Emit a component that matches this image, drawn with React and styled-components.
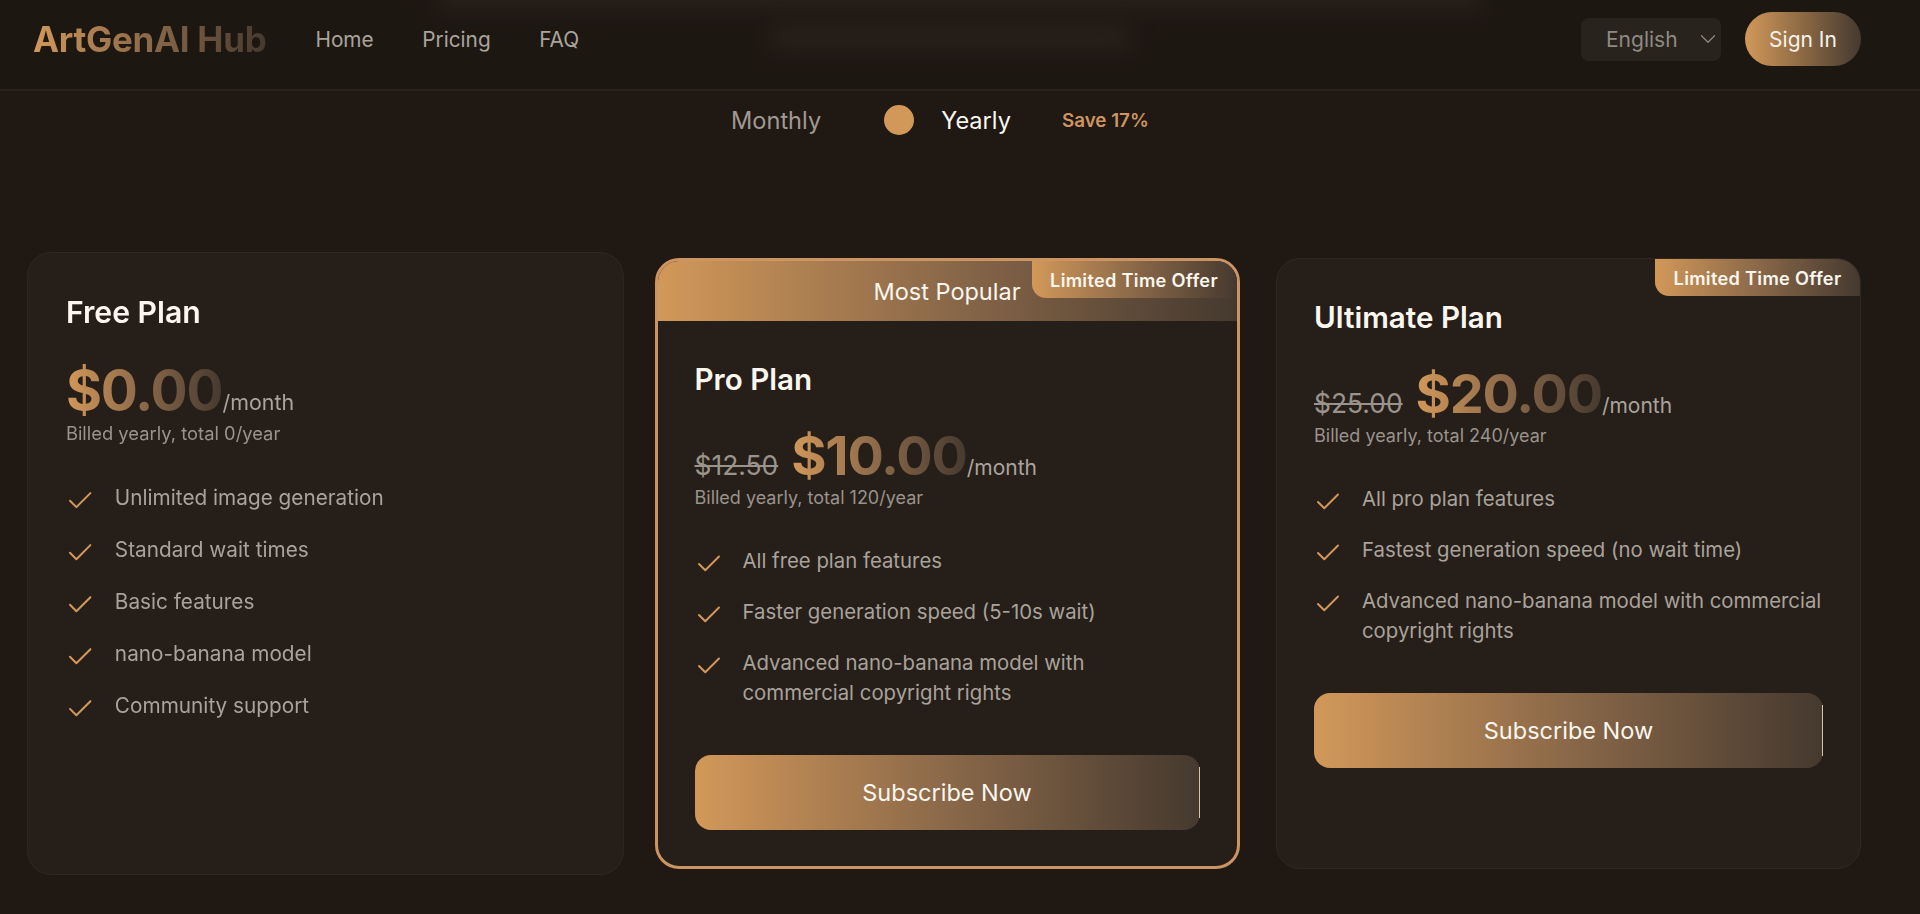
import { Check, ChevronDown } from "lucide-react";
import styled, { createGlobalStyle } from "styled-components";

const GlobalStyle = createGlobalStyle`
  html, body {
    margin: 0;
    height: 914px;
    overflow: hidden;
    background: #1f1813;
    font-family: "Inter", "Liberation Sans", sans-serif;
  }
  * { box-sizing: border-box; }
`;

const goldFade = "linear-gradient(90deg, #d29859 0%, #8a6849 50%, #45392f 100%)";

const Page = styled.div`
  width: 1920px;
  height: 914px;
  overflow: hidden;
`;

const Header = styled.header`
  position: relative;
  height: 91px;
  padding: 12px 59px 0 33px;
  display: flex;
  justify-content: space-between;
  background: #1d1712;
  border-bottom: 2px solid #2a231d;
  overflow: hidden;
`;
const BlurLine = styled.div`
  position: absolute;
  left: ${(p) => p.$left}px;
  top: ${(p) => p.$top}px;
  width: ${(p) => p.$width}px;
  height: ${(p) => p.$height}px;
  background: #3a3027;
  filter: blur(12px);
  opacity: 0.55;
`;
const HeaderLeft = styled.div`
  display: flex;
  align-items: center;
  height: 54px;
  position: relative;
`;
const Logo = styled.div`
  font-size: 35px;
  font-weight: 700;
  letter-spacing: -0.3px;
  background: ${goldFade};
  -webkit-background-clip: text;
  background-clip: text;
  color: transparent;
  margin-right: 49px;
`;
const Nav = styled.nav`
  display: flex;
  gap: 48.5px;
`;
const NavLink = styled.a`
  font-size: 20.8px;
  color: #aaa49c;
`;
const HeaderRight = styled.div`
  display: flex;
  align-items: center;
  gap: 24px;
  height: 54px;
  position: relative;
`;
const LangSelect = styled.div`
  width: 140px;
  height: 43px;
  padding: 0 0 0 25px;
  display: flex;
  align-items: center;
  justify-content: space-between;
  background: #29231e;
  border-radius: 8px;
  font-size: 21px;
  color: #8f8a82;
`;
const SignIn = styled.button`
  width: 116px;
  height: 54px;
  border: none;
  border-radius: 27px;
  background: linear-gradient(90deg, #d29859 0%, #45392f 100%);
  color: #f7f2ea;
  font: 400 21px "Inter", sans-serif;
`;

const ToggleRow = styled.div`
  height: 56px;
  padding: 2px 0 0 731px;
  display: flex;
  align-items: center;
  font-size: 23.6px;
`;
const ToggleLabel = styled.span`
  color: ${(p) => (p.$active ? "#fbf6ee" : "#a09a92")};
`;
const Track = styled.div`
  width: 62px;
  margin: 0 27px 0 31px;
  display: flex;
  justify-content: flex-end;
`;
const Thumb = styled.div`
  width: 30px;
  height: 30px;
  border-radius: 50%;
  background: #d29859;
`;
const Save = styled.span`
  margin-left: 51px;
  font-size: 18.8px;
  font-weight: 600;
  color: #cf9560;
`;

const Plans = styled.main`
  margin-top: 111px;
  padding-left: 33px;
  display: grid;
  grid-template-columns: repeat(3, 585px);
  column-gap: 36.5px;
  height: 611px;
`;
const Card = styled.section`
  position: relative;
  display: flex;
  flex-direction: column;
  background: #261e19;
  border: ${(p) => (p.$featured ? "3px solid #cc9462" : "1px solid #30281f")};
  border-radius: 24px;
  overflow: hidden;
  transform: ${(p) => (p.$hovered ? "scale(1.02)" : "none")};
`;
const PopularBanner = styled.div`
  flex: none;
  height: 60px;
  display: flex;
  align-items: center;
  justify-content: center;
  background: ${goldFade};
  color: #fbf6ee;
  font-size: 23.5px;
`;
const OfferBadge = styled.div`
  position: absolute;
  top: 0;
  right: 0;
  width: 205px;
  height: 37px;
  display: flex;
  align-items: center;
  justify-content: center;
  background: ${goldFade};
  border-bottom-left-radius: 14px;
  color: #fbf6ee;
  font-size: 18.2px;
  font-weight: 600;
  letter-spacing: 0.3px;
`;
const CardBody = styled.div`
  flex: 1;
  padding: 36px 37px 30px;
  display: flex;
  flex-direction: column;
`;
const PlanName = styled.h2`
  margin: 0;
  font-size: 29.6px;
  line-height: 44px;
  font-weight: 600;
  color: #fbf6ee;
`;
const PriceRow = styled.div`
  margin-top: 24.5px;
  height: 58.5px;
  display: flex;
  align-items: baseline;
  line-height: 60px;
`;
const OldPrice = styled.span`
  margin-right: 13px;
  font-size: 26.4px;
  color: #99938b;
  text-decoration: line-through;
`;
const Amount = styled.span`
  font-size: 54px;
  font-weight: 700;
  letter-spacing: -1.2px;
  background: ${goldFade};
  -webkit-background-clip: text;
  background-clip: text;
  color: transparent;
`;
const Per = styled.span`
  font-size: 21px;
  color: #aaa49c;
`;
const Billed = styled.div`
  font-size: 18px;
  line-height: 28px;
  color: #99938b;
`;
const Features = styled.ul`
  margin: 34px 0 0;
  padding: 0;
  list-style: none;
  display: flex;
  flex-direction: column;
  gap: 21.5px;
`;
const Feature = styled.li`
  display: flex;
  gap: 19px;
  font-size: 20.35px;
  line-height: 29.5px;
  color: #a9a39b;
`;
const CheckMark = styled(Check)`
  flex: none;
  width: 30px;
  height: 30px;
  margin: 3px 0 -4px -1px;
  color: #d29859;
  stroke-width: 1.6;
`;
const Subscribe = styled.button`
  position: relative;
  width: 100%;
  height: 75px;
  margin-top: 48px;
  border: none;
  border-radius: 16px;
  background: ${goldFade};
  color: #fbf6ee;
  font: 400 23.5px "Inter", sans-serif;
  &::after {
    content: "";
    position: absolute;
    top: 12px;
    bottom: 12px;
    right: 0;
    width: 1px;
    background: #d8c3a8;
  }
`;

const plans = [
  {
    name: "Free Plan",
    amount: "$0.00",
    billed: "Billed yearly, total 0/year",
    hovered: true,
    features: [
      "Unlimited image generation",
      "Standard wait times",
      "Basic features",
      "nano-banana model",
      "Community support",
    ],
  },
  {
    name: "Pro Plan",
    amount: "$10.00",
    old: "$12.50",
    billed: "Billed yearly, total 120/year",
    featured: true,
    offer: true,
    cta: true,
    features: [
      "All free plan features",
      "Faster generation speed (5-10s wait)",
      "Advanced nano-banana model with commercial copyright rights",
    ],
  },
  {
    name: "Ultimate Plan",
    amount: "$20.00",
    old: "$25.00",
    billed: "Billed yearly, total 240/year",
    offer: true,
    cta: true,
    features: [
      "All pro plan features",
      "Fastest generation speed (no wait time)",
      "Advanced nano-banana model with commercial copyright rights",
    ],
  },
];

const App = () => {
  return (
    <Page>
      <GlobalStyle />
      <Header>
        <BlurLine $left={440} $top={-14} $width={1040} $height={20} />
        <BlurLine $left={770} $top={28} $width={360} $height={18} />
        <HeaderLeft>
          <Logo>ArtGenAI Hub</Logo>
          <Nav>
            <NavLink>Home</NavLink>
            <NavLink>Pricing</NavLink>
            <NavLink>FAQ</NavLink>
          </Nav>
        </HeaderLeft>
        <HeaderRight>
          <LangSelect>
            English
            <ChevronDown size={26} strokeWidth={1.1} />
          </LangSelect>
          <SignIn>Sign In</SignIn>
        </HeaderRight>
      </Header>

      <ToggleRow>
        <ToggleLabel>Monthly</ToggleLabel>
        <Track>
          <Thumb />
        </Track>
        <ToggleLabel $active>Yearly</ToggleLabel>
        <Save>Save 17%</Save>
      </ToggleRow>

      <Plans>
        {plans.map((plan) => (
          <Card key={plan.name} $featured={plan.featured} $hovered={plan.hovered}>
            {plan.featured && <PopularBanner>Most Popular</PopularBanner>}
            {plan.offer && <OfferBadge>Limited Time Offer</OfferBadge>}
            <CardBody>
              <PlanName>{plan.name}</PlanName>
              <PriceRow>
                {plan.old && <OldPrice>{plan.old}</OldPrice>}
                <Amount>{plan.amount}</Amount>
                <Per>/month</Per>
              </PriceRow>
              <Billed>{plan.billed}</Billed>
              <Features>
                {plan.features.map((item) => (
                  <Feature key={item}>
                    <CheckMark />
                    {item}
                  </Feature>
                ))}
              </Features>
              {plan.cta && <Subscribe>Subscribe Now</Subscribe>}
            </CardBody>
          </Card>
        ))}
      </Plans>
    </Page>
  );
};

export default App;
